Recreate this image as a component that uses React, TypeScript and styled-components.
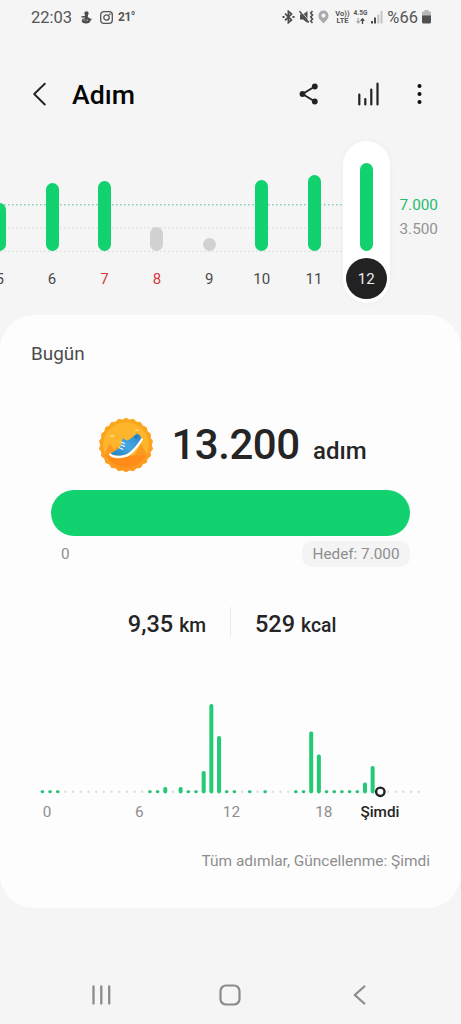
import React from 'react';
import styled, { createGlobalStyle } from 'styled-components';

const GREEN = '#11d26e';

const GlobalStyle = createGlobalStyle`
  * { box-sizing: border-box; }
  body {
    margin: 0;
    background: #f5f5f5;
    font-family: Roboto, "Liberation Sans", sans-serif;
    color: #252525;
  }
`;

const Screen = styled.div`
  width: 461px;
  height: 1024px;
  display: flex;
  flex-direction: column;
  overflow: hidden;
  background: #f5f5f5;
`;

const StatusBar = styled.header`
  height: 34px;
  padding: 0 30px 0 31px;
  display: flex;
  align-items: center;
  justify-content: space-between;
  color: #555;
`;

const StatusGroup = styled.div<{ $gap: number; $end?: number }>`
  display: flex;
  align-items: center;
  gap: ${(p) => p.$gap}px;
  margin-right: ${(p) => p.$end ?? 0}px;
`;

const StatusText = styled.span<{ $size: number }>`
  padding-top: 1px;
  font-size: ${(p) => p.$size}px;
  line-height: 20px;
`;

const Temperature = styled.span`
  margin-left: -3px;
  font-size: 12px;
  font-weight: 700;
  letter-spacing: -0.5px;
`;

const Stacked = styled.span<{ $size: number }>`
  display: flex;
  flex-direction: column;
  align-items: center;
  font-size: ${(p) => p.$size}px;
  font-weight: 700;
  line-height: 7.5px;
`;

const AppBar = styled.div`
  height: 96px;
  padding: 24px 39px 0 30px;
  display: flex;
  align-items: center;
`;

const Title = styled.h1`
  margin: 2px auto 0 22px;
  font-size: 26.7px;
  font-weight: 500;
  line-height: 32px;
  color: #050505;
`;

const Actions = styled.div`
  display: flex;
  align-items: center;
  gap: 37px;
`;

const Week = styled.section`
  height: 185px;
  flex: none;
  display: grid;
  grid-template-columns: 392px 1fr;
  overflow: hidden;
`;

const GridLines = styled.svg`
  grid-area: 1 / 1;
`;

const Days = styled.div`
  grid-area: 1 / 1;
  display: flex;
  margin-left: -26.5px;
  padding-top: 11px;
`;

const Day = styled.div<{ $selected?: boolean }>`
  flex: none;
  width: ${(p) => (p.$selected ? 47 : 52.4)}px;
  margin-left: ${(p) => (p.$selected ? 2.5 : 0)}px;
  height: 162px;
  border-radius: 24px;
  background: ${(p) => (p.$selected ? '#fff' : 'transparent')};
  box-shadow: ${(p) => (p.$selected ? '0 0 7px rgba(0, 0, 0, 0.035)' : 'none')};
  display: flex;
  flex-direction: column;
  align-items: center;
`;

const BarSlot = styled.div`
  height: 110.4px;
  display: flex;
  align-items: flex-end;
`;

const DayBar = styled.div<{ $h: number; $muted?: boolean }>`
  width: 13px;
  height: ${(p) => p.$h}px;
  border-radius: 7px;
  background: ${(p) => (p.$muted ? '#d0d1d1' : GREEN)};
`;

const DayLabel = styled.span<{ $tone?: 'holiday' | 'selected' }>`
  margin-top: 7px;
  width: 41px;
  height: 41px;
  border-radius: 50%;
  display: flex;
  align-items: center;
  justify-content: center;
  font-size: 15px;
  background: ${(p) => (p.$tone === 'selected' ? '#222' : 'transparent')};
  color: ${(p) =>
    p.$tone === 'selected' ? '#eee' : p.$tone === 'holiday' ? '#d6383f' : '#4b4b4b'};
`;

const Scale = styled.div`
  padding: 64px 0 0 7.5px;
  display: flex;
  flex-direction: column;
  gap: 1px;
`;

const ScaleLabel = styled.span<{ $goal?: boolean }>`
  font-size: 15.3px;
  line-height: 23px;
  color: ${(p) => (p.$goal ? '#22bd6e' : '#929292')};
`;

const Card = styled.main`
  height: 593px;
  flex: none;
  border-radius: 34px;
  background: #fdfdfd;
  display: flex;
  flex-direction: column;
`;

const CardTitle = styled.h2`
  margin: 27px 0 0 31px;
  font-size: 18.9px;
  font-weight: 400;
  line-height: 24px;
  color: #4c4c4c;
`;

const Summary = styled.div`
  height: 124px;
  padding: 32px 0 0 98px;
  display: flex;
  align-items: flex-start;
`;

const Badge = styled.svg`
  margin-top: 19px;
`;

const StepCount = styled.div`
  margin: 22px 0 0 17.5px;
  display: flex;
  align-items: baseline;
`;

const BigNumber = styled.span`
  font-size: 42px;
  line-height: 50px;
  font-weight: 500;
  letter-spacing: -0.5px;
`;

const BigUnit = styled.span`
  margin-left: 13.5px;
  font-size: 24px;
  font-weight: 500;
`;

const Progress = styled.div`
  height: 46px;
  margin: 0 51px;
  border-radius: 23px;
  background: ${GREEN};
`;

const ProgressLabels = styled.div`
  height: 26px;
  margin: 5px 51px 0 51px;
  padding-left: 10px;
  display: flex;
  align-items: center;
  justify-content: space-between;
  font-size: 15.3px;
  color: #8e8e8e;
`;

const Goal = styled.span`
  width: 108px;
  height: 26px;
  border-radius: 10px;
  background: #f4f4f5;
  text-align: center;
  line-height: 26px;
`;

const Metrics = styled.div`
  height: 32px;
  margin-top: 40px;
  display: grid;
  grid-template-columns: 206px 1px 1fr;
  column-gap: 24px;
  font-weight: 500;
`;

const Metric = styled.div<{ $end?: boolean }>`
  padding-top: 1px;
  text-align: ${(p) => (p.$end ? 'right' : 'left')};
  font-size: 23.5px;
  line-height: 32px;
`;

const MetricUnit = styled.span`
  margin-left: 6px;
  font-size: 19.3px;
`;

const Divider = styled.span`
  height: 30px;
  background: #e9e9e9;
`;

const HourChart = styled.svg`
  display: block;
  margin-top: 55px;
  flex: none;
`;

const HourLabels = styled.div`
  height: 24px;
  padding-left: 1px;
  display: grid;
  grid-template-columns: 92.2px 92.2px 92.2px 77.4px 50px;
  text-align: center;
  font-size: 15.3px;
  line-height: 24px;
  color: #8e8e8e;
`;

const HourLabel = styled.span<{ $shift?: number; $now?: boolean }>`
  padding-left: ${(p) => p.$shift ?? 0}px;
  font-size: 15.3px;
  font-weight: ${(p) => (p.$now ? 500 : 400)};
  color: ${(p) => (p.$now ? '#252525' : 'inherit')};
`;

const Updated = styled.p`
  margin: 25px 31px 0 0;
  text-align: right;
  font-size: 15.45px;
  line-height: 24px;
  color: #8e8e8e;
`;

const NavBar = styled.nav`
  height: 58px;
  margin-top: auto;
  padding: 0 36px;
  display: grid;
  grid-template-columns: repeat(3, 1fr);
  justify-items: center;
  align-items: center;
`;

type DayData = { day: number; h: number; muted?: boolean; tone?: 'holiday' | 'selected' };

const days: DayData[] = [
  { day: 5, h: 48 },
  { day: 6, h: 68 },
  { day: 7, h: 70.5, tone: 'holiday' },
  { day: 8, h: 24, muted: true, tone: 'holiday' },
  { day: 9, h: 13, muted: true },
  { day: 10, h: 71 },
  { day: 11, h: 76.5 },
  { day: 12, h: 88.5, tone: 'selected' },
];

const HALF_HOURS = 50;
const NOW = 44;
const active = [0, 1, 2, 14, 15, 19, 20, 24, 25, 27, 29, 33, 34, 37, 38, 39, 40, 41];
const bars: Record<number, number> = {
  16: 6.5, 18: 6.5, 21: 22.5, 22: 89.5, 23: 57.5, 35: 62, 36: 39, 42: 11, 43: 27.5,
};

function StepsByHour() {
  return (
    <HourChart width="461" height="106" viewBox="0 0 461 106">
      {Array.from({ length: HALF_HOURS }, (_, i) => {
        const x = 42.4 + i * 7.68;
        if (i === NOW) {
          return <circle key={i} cx={x} cy="97.8" r="4.2" fill="#fff" stroke="#222" strokeWidth="2.4" />;
        }
        if (bars[i]) {
          return <rect key={i} x={x - 2} y={99.4 - bars[i]} width="4" height={bars[i]} rx="1.8" fill="#24c975" />;
        }
        return active.includes(i) ? (
          <rect key={i} x={x - 1.8} y="96.2" width="3.6" height="3" rx="1.4" fill="#2bc078" />
        ) : (
          <circle key={i} cx={x} cy="97.8" r="1.2" fill="#dcdcdc" />
        );
      })}
    </HourChart>
  );
}

function StepBadge() {
  const teeth = 22;
  const points = Array.from({ length: teeth * 2 }, (_, i) => {
    const r = i % 2 ? 25.2 : 26.8;
    const a = (i * Math.PI) / teeth;
    return `${28 + r * Math.sin(a)},${28 - r * Math.cos(a)}`;
  }).join(' ');
  return (
    <Badge width="56" height="56" viewBox="0 0 56 56">
      <defs>
        <linearGradient id="sky" x1="0" y1="0" x2="0" y2="1">
          <stop offset="0" stopColor="#f8a91c" />
          <stop offset="1" stopColor="#ff981f" />
        </linearGradient>
        <linearGradient id="shoe" x1="1" y1="0" x2="0" y2="1">
          <stop offset="0" stopColor="#2684c8" />
          <stop offset="0.5" stopColor="#45a8e2" />
          <stop offset="1" stopColor="#1f7fc6" />
        </linearGradient>
        <clipPath id="disc"><circle cx="28" cy="28" r="22.8" /></clipPath>
      </defs>
      <polygon points={points} fill="url(#sky)" stroke="url(#sky)" strokeWidth="1" strokeLinejoin="round" />
      <circle cx="28" cy="28" r="22.8" fill="#fdb62b" />
      <g clipPath="url(#disc)">
        <path d="M5 39 12 26l4 7 3-4 6 10Z M36 39l7-12 7 12Z" fill="#fa9a20" />
        <path d="M4 38.5h48V54H4Z" fill="#ff8b19" />
        <path d="M10 20h7l-2-3Z M36 14h6l-3-2Z" fill="#fed26f" />
      </g>
      <path d="M12.500 37.500C15 40.500 23 40.500 28.500 38.500 35.500 35.500 40 27.500 43.600 22.500" fill="none" stroke="#fff" strokeWidth="2.600" strokeLinecap="round" />
      <path d="M12.500 36.500c3.500-2 8-4.200 9.900-7.300 1.300-2.200.8-5.800 2.400-7.500 1.700-.6 1.900 1.800 4.200 1.700 3.200-.2 6-4.200 9.600-6.600 2.200-.1 4.600 2.700 4.500 4.700-3.400 5-8.300 13-15.100 15.700-5 1.800-12.500 1.600-15.500-.7Z" fill="url(#shoe)" />
      <path d="m23.300 25.200 3.200 1.200M23 28l3.500 1.400M21.500 30.800l3.300 1.600" stroke="#e8f7ff" strokeWidth="1.200" strokeLinecap="round" />
      <circle cx="38" cy="20.300" r="1.200" fill="#1c6fae" />
    </Badge>
  );
}

const WidgetIcon = () => (
  <svg width="12" height="13" viewBox="0 0 12 13" fill="#4c4c4c">
    <circle cx="6.500" cy="2.300" r="2.100" />
    <path d="M5.100 3.500h3l-.4 2.800c2.300.3 3.400 1.800 2.700 3.600-.7 1.800-2.200 2.500-4.100 2.500-3 0-4.800-1-4.500-3 .2-1.500 1.500-2.100 3-2.200Z" />
    <path d="m1.500 6 4-.5M8.500 8.500h3" stroke="#4c4c4c" strokeWidth="1.300" />
    <path d="M3.500 9h2M7.700 8.500 7 10" stroke="#f5f5f5" strokeWidth=".7" fill="none" />
  </svg>
);

const CameraIcon = () => (
  <svg width="13" height="13" viewBox="0 0 13 13" fill="none" stroke="#555" strokeWidth="1.300">
    <rect x=".7" y=".7" width="11.600" height="11.600" rx="3" />
    <circle cx="6.500" cy="6.500" r="2.700" />
    <circle cx="9.800" cy="3.200" r=".3" />
  </svg>
);

const BluetoothIcon = () => (
  <svg width="13" height="14" viewBox="0 0 13 14" fill="none" stroke="#4c4c4c" strokeWidth="1.700">
    <path d="m3 3.700 6.500 6.200L6.400 12.600V1.400l3.100 2.700L3 10.300" />
    <path d="M.5 7h2M10.500 7h2" strokeWidth="2" />
  </svg>
);

const MuteIcon = () => (
  <svg width="15" height="14" viewBox="0 0 15 14" fill="none">
    <path d="M1 4.500h3L8.500 1v12L4 9.500H1Z" fill="#505050" />
    <path d="m2 1.200 8 9.500" stroke="#f5f5f5" strokeWidth=".8" />
    <path d="m.5 1.200 9.200 11.300" stroke="#505050" strokeWidth="1.500" />
    <path d="m13.500 1-1.800 2 1.800 2-1.800 2 1.800 2-1.800 2 1.800 2" stroke="#505050" strokeWidth="1.600" />
  </svg>
);

const PinIcon = () => (
  <svg width="11" height="14" viewBox="0 0 11 14">
    <path
      fill="#aaa"
      fillRule="evenodd"
      d="M5.500.5A5 5 0 0 0 .5 5.500C.5 9 3.500 11 5.500 13.500 7.500 11 10.500 9 10.500 5.500A5 5 0 0 0 5.500.5Zm0 3a2.100 2.100 0 1 1 0 4.200 2.100 2.100 0 0 1 0-4.200Z"
    />
  </svg>
);

const DataArrows = () => (
  <svg width="9" height="6" viewBox="0 0 9 6" fill="none" strokeWidth="1.300">
    <path d="M2.200 0v4.500M.5 3.200l1.700 1.700 1.700-1.700" stroke="#aaa" />
    <path d="M6.500 6V1.200M4.700 2.800l1.800-1.900 1.800 1.900" stroke="#444" />
  </svg>
);

const SignalIcon = () => (
  <svg width="12" height="13" viewBox="0 0 12 13">
    <path d="M0 10h2v2.500H0ZM3 6.500h2v6H3Z" fill="#4c4c4c" />
    <path d="M6.300 3.500h2v9h-2ZM9.500 0h2v12.500h-2Z" fill="#c4c4c4" />
  </svg>
);

const BatteryIcon = () => (
  <svg width="9" height="14" viewBox="0 0 9 14">
    <path d="M2.500 0h4v1.500H8q1 0 1 1V6H0V2.500q0-1 1-1h1.500Z" fill="#b8b8b8" />
    <path d="M0 5.500h9V12q0 1.500-1.500 1.500h-6Q0 13.500 0 12Z" fill="#505050" />
  </svg>
);

const BackIcon = () => (
  <svg width="20" height="26" viewBox="0 0 20 26" fill="none" stroke="#222" strokeWidth="1.900" strokeLinecap="round" strokeLinejoin="round">
    <path d="M14.800 2.700 4.200 13l10.600 10.500" />
  </svg>
);

const ShareIcon = () => (
  <svg width="20" height="24" viewBox="0 0 20 24" fill="#222">
    <path d="M15.800 4.500 3.500 12l12.300 7.500" fill="none" stroke="#222" strokeWidth="1.900" />
    <circle cx="15.800" cy="4.500" r="2.900" />
    <circle cx="3.500" cy="12" r="2.900" />
    <circle cx="15.800" cy="19.500" r="2.900" />
  </svg>
);

const StatsIcon = () => (
  <svg width="24" height="24" viewBox="0 0 24 24" stroke="#222" strokeWidth="2.200" strokeLinecap="round">
    <path d="M3.300 12.500v10M9.300 17v5.500M15.300 7.500v15M21.500 1.500v21" />
  </svg>
);

const MoreIcon = () => (
  <svg width="5" height="24" viewBox="0 0 5 24" fill="#111">
    <circle cx="2.500" cy="4" r="2.050" />
    <circle cx="2.500" cy="12" r="2.050" />
    <circle cx="2.500" cy="20" r="2.050" />
  </svg>
);

export default function App() {
  return (
    <>
      <GlobalStyle />
      <Screen>
        <StatusBar>
          <StatusGroup $gap={8}>
            <StatusText $size={16.5}>22:03</StatusText>
            <WidgetIcon />
            <CameraIcon />
            <Temperature>21°</Temperature>
          </StatusGroup>
          <StatusGroup $gap={4}>
            <StatusGroup $gap={4} $end={2}>
              <BluetoothIcon />
              <MuteIcon />
              <PinIcon />
            </StatusGroup>
            <Stacked $size={7.5}>
              <span>Vo))</span>
              <span>LTE</span>
            </Stacked>
            <Stacked $size={6.5}>
              <span>4.5G</span>
              <DataArrows />
            </Stacked>
            <SignalIcon />
            <StatusText $size={16.5}>%66</StatusText>
            <BatteryIcon />
          </StatusGroup>
        </StatusBar>

        <AppBar>
          <BackIcon />
          <Title>Adım</Title>
          <Actions>
            <ShareIcon />
            <StatsIcon />
            <MoreIcon />
          </Actions>
        </AppBar>

        <Week>
          <GridLines width="343" height="130" viewBox="0 0 343 130" strokeDasharray="1.500 2.500">
            <path d="M0 74.700h343" stroke="#55c08c" strokeWidth="1.100" />
            <path d="M0 97.800h343M0 121.300h343" stroke="#d6d6d6" />
          </GridLines>
          <Days>
            {days.map((d) => (
              <Day key={d.day} $selected={d.tone === 'selected'}>
                <BarSlot>
                  <DayBar $h={d.h} $muted={d.muted} />
                </BarSlot>
                <DayLabel $tone={d.tone}>{d.day}</DayLabel>
              </Day>
            ))}
          </Days>
          <Scale>
            <ScaleLabel $goal>7.000</ScaleLabel>
            <ScaleLabel>3.500</ScaleLabel>
          </Scale>
        </Week>

        <Card>
          <CardTitle>Bugün</CardTitle>
          <Summary>
            <StepBadge />
            <StepCount>
              <BigNumber>13.200</BigNumber>
              <BigUnit>adım</BigUnit>
            </StepCount>
          </Summary>
          <Progress />
          <ProgressLabels>
            <span>0</span>
            <Goal>Hedef: 7.000</Goal>
          </ProgressLabels>
          <Metrics>
            <Metric $end>
              9,35<MetricUnit>km</MetricUnit>
            </Metric>
            <Divider />
            <Metric>
              529<MetricUnit>kcal</MetricUnit>
            </Metric>
          </Metrics>
          <StepsByHour />
          <HourLabels>
            <HourLabel>0</HourLabel>
            <HourLabel>6</HourLabel>
            <HourLabel>12</HourLabel>
            <HourLabel $shift={15}>18</HourLabel>
            <HourLabel $now>Şimdi</HourLabel>
          </HourLabels>
          <Updated>Tüm adımlar, Güncellenme: Şimdi</Updated>
        </Card>

        <NavBar>
          <svg width="22" height="22" viewBox="0 0 22 22" stroke="#8b8b8b" strokeWidth="2.300" strokeLinecap="round">
            <path d="M3.500 2.500v17M11.300 2.500v17M19.200 2.500v17" />
          </svg>
          <svg width="22" height="22" viewBox="0 0 22 22" fill="none" stroke="#8b8b8b" strokeWidth="2.200">
            <rect x="1.500" y="1.500" width="19" height="19" rx="5.500" />
          </svg>
          <svg width="22" height="22" viewBox="0 0 22 22" fill="none" stroke="#8b8b8b" strokeWidth="2.300" strokeLinecap="round" strokeLinejoin="round">
            <path d="M15.300 2.500 5.800 11l9.500 8.500" />
          </svg>
        </NavBar>
      </Screen>
    </>
  );
}
